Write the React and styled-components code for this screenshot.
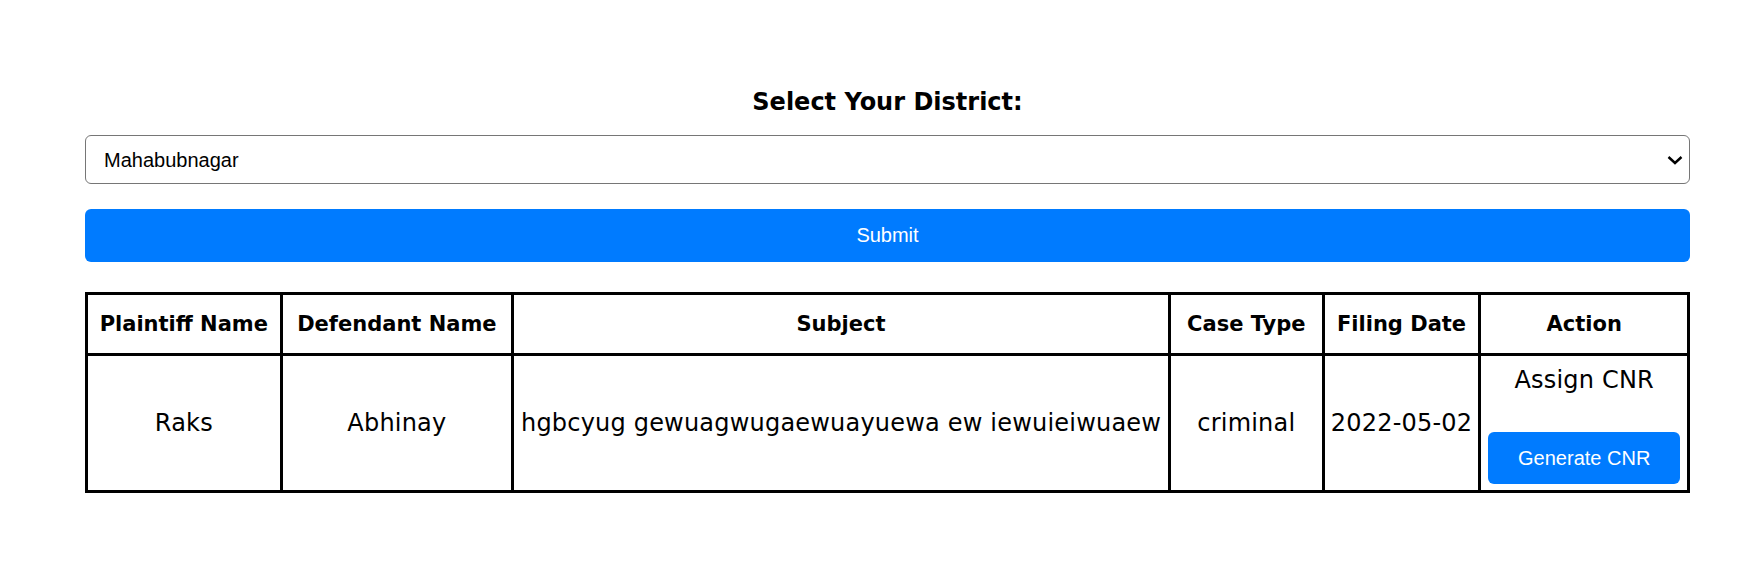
import styled, { createGlobalStyle } from "styled-components";

const GlobalStyle = createGlobalStyle`
  body {
    margin: 0;
    background: #fff;
    font-family: "DejaVu Sans", sans-serif;
    color: #000;
  }
`;

const Page = styled.main`
  padding: 85px 57px 40px 85px;
  display: flex;
  flex-direction: column;
`;

const Title = styled.h2`
  margin: 0 0 16px;
  font-size: 24px;
  line-height: 34px;
  font-weight: 700;
  text-align: center;
`;

const SelectWrap = styled.div`
  position: relative;
  margin: 0 0 25px;
`;

const Select = styled.select`
  appearance: none;
  box-sizing: border-box;
  display: block;
  height: 49px;
  width: 100%;
  padding: 0 40px 0 18px;
  font-family: "Liberation Sans", Arial, sans-serif;
  font-size: 20px;
  color: #000;
  background: #fff;
  border: 1px solid #767676;
  border-radius: 6px;
`;

const Chevron = styled.svg`
  position: absolute;
  right: 7px;
  top: 50%;
  width: 16px;
  height: 10px;
  margin-top: -5px;
  pointer-events: none;
`;

const Button = styled.button`
  box-sizing: border-box;
  width: 100%;
  height: ${(p) => (p.$small ? "52px" : "53px")};
  border: none;
  border-radius: 6px;
  background: #007bff;
  color: #fff;
  font-family: "Liberation Sans", Arial, sans-serif;
  font-size: 20px;
  cursor: pointer;
`;

const Table = styled.table`
  margin-top: 30px;
  width: 100%;
  border-collapse: collapse;
  table-layout: fixed;
  border: 3px solid #000;
`;

const Th = styled.th`
  border: 3px solid #000;
  padding: 14px 4px;
  line-height: 30px;
  font-size: 21px;
  font-weight: 700;
  white-space: nowrap;
  text-align: center;
`;

const Td = styled.td`
  border: 3px solid #000;
  padding: 8px 3px;
  font-size: 24px;
  letter-spacing: 0.2px;
  line-height: 30px;
  text-align: center;
  vertical-align: middle;
  white-space: nowrap;
`;

const ActionCell = styled(Td)`
  padding: 9px 7px 6px;
`;

const ActionLabel = styled.div`
  margin-bottom: 37px;
`;

const columns = [
  { label: "Plaintiff Name", width: "12.15%" },
  { label: "Defendant Name", width: "14.45%" },
  { label: "Subject", width: "41%" },
  { label: "Case Type", width: "9.6%" },
  { label: "Filing Date", width: "9.78%" },
  { label: "Action", width: "13.02%" },
];

const cases = [
  {
    plaintiff: "Raks",
    defendant: "Abhinay",
    subject: "hgbcyug gewuagwugaewuayuewa ew iewuieiwuaew",
    type: "criminal",
    date: "2022-05-02",
  },
];

const districts = ["Mahabubnagar", "Hyderabad", "Warangal", "Karimnagar", "Nizamabad"];

export default function App() {
  return (
    <>
      <GlobalStyle />
      <Page>
        <Title>Select Your District:</Title>
        <SelectWrap>
          <Select defaultValue="Mahabubnagar">
            {districts.map((d) => (
              <option key={d}>{d}</option>
            ))}
          </Select>
          <Chevron viewBox="0 0 16 10">
            <path d="M1.5 2 L8 8 L14.5 2" fill="none" stroke="#000" strokeWidth="2.4" />
          </Chevron>
        </SelectWrap>
        <Button>Submit</Button>
        <Table>
          <colgroup>
            {columns.map((c) => (
              <col key={c.label} style={{ width: c.width }} />
            ))}
          </colgroup>
          <thead>
            <tr>
              {columns.map((c) => (
                <Th key={c.label}>{c.label}</Th>
              ))}
            </tr>
          </thead>
          <tbody>
            {cases.map((c) => (
              <tr key={c.plaintiff}>
                <Td>{c.plaintiff}</Td>
                <Td>{c.defendant}</Td>
                <Td>{c.subject}</Td>
                <Td>{c.type}</Td>
                <Td>{c.date}</Td>
                <ActionCell>
                  <ActionLabel>Assign CNR</ActionLabel>
                  <Button $small>Generate CNR</Button>
                </ActionCell>
              </tr>
            ))}
          </tbody>
        </Table>
      </Page>
    </>
  );
}
